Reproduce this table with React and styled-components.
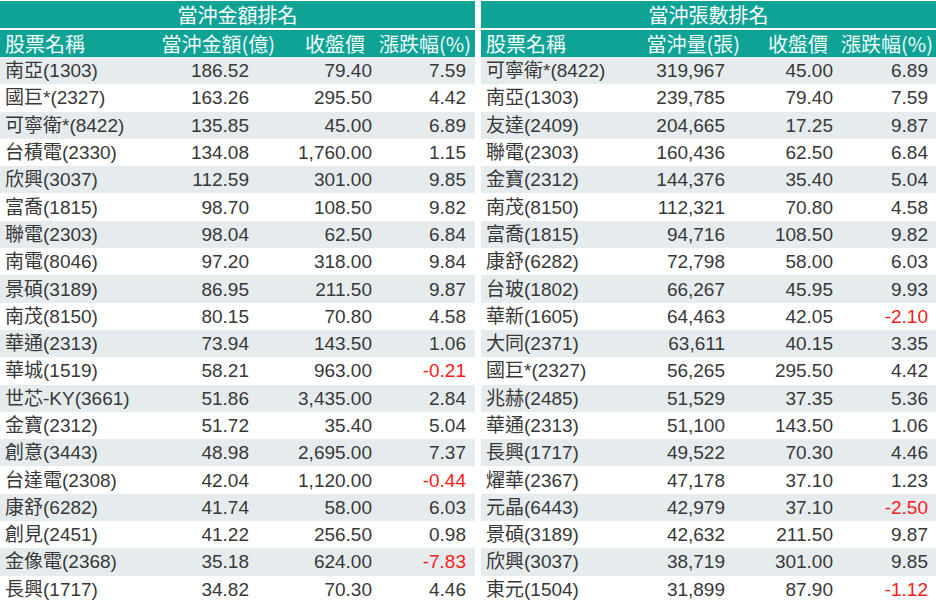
import React from 'react';
import styled, { createGlobalStyle } from 'styled-components';

const GlobalStyle = createGlobalStyle`
  html, body {
    margin: 0;
    padding: 0;
    background: #ffffff;
  }
  body {
    font-family: 'Liberation Sans', 'Noto Sans CJK TC', sans-serif;
  }
`;

const Page = styled.main`
  display: flex;
  gap: 6px;
  width: 936px;
  height: 604px;
  padding-top: 1px;
  box-sizing: border-box;
  overflow: hidden;
`;

const Table = styled.section`
  width: ${(p) => p.$width}px;
  display: flex;
  flex-direction: column;
`;

const TitleBar = styled.div`
  height: 27px;
  background: #0fa396;
  color: #ffffff;
  font-family: 'Noto Sans CJK TC', sans-serif;
  font-size: 20px;
  line-height: 27px;
  text-align: center;
  margin-bottom: 2px;
`;

const Row = styled.div`
  display: grid;
  grid-template-columns: ${(p) => p.$cols};
  height: ${(p) => (p.$head ? 27 : 27.3)}px;
  align-items: center;
  background: ${(p) => (p.$head ? '#0fa396' : p.$shade ? '#e6ecee' : '#ffffff')};
  color: ${(p) => (p.$head ? '#f2fbfa' : '#383838')};
  font-family: ${(p) =>
    p.$head
      ? "'Noto Sans CJK TC', sans-serif"
      : "'Liberation Sans', 'Noto Sans CJK TC', sans-serif"};
  font-size: ${(p) => (p.$head ? 20 : 19)}px;
  line-height: 27px;
  white-space: nowrap;
`;

const Cell = styled.div`
  text-align: ${(p) => (p.$left ? 'left' : 'right')};
  padding-left: ${(p) => (p.$left ? 5 : 0)}px;
  padding-right: ${(p) => p.$pr || 0}px;
  color: ${(p) => (p.$down ? '#ff1a1a' : 'inherit')};
`;

const leftTable = {
  title: '當沖金額排名',
  width: 475,
  cols: '150px 130px 95px 100px',
  heads: ['股票名稱', '當沖金額(億)', '收盤價', '漲跌幅(%)'],
  headPad: [0, 5, 10, 4],
  dataPad: [0, 31, 3, 9],
  rows: [
    ['南亞(1303)', '186.52', '79.40', '7.59'],
    ['國巨*(2327)', '163.26', '295.50', '4.42'],
    ['可寧衛*(8422)', '135.85', '45.00', '6.89'],
    ['台積電(2330)', '134.08', '1,760.00', '1.15'],
    ['欣興(3037)', '112.59', '301.00', '9.85'],
    ['富喬(1815)', '98.70', '108.50', '9.82'],
    ['聯電(2303)', '98.04', '62.50', '6.84'],
    ['南電(8046)', '97.20', '318.00', '9.84'],
    ['景碩(3189)', '86.95', '211.50', '9.87'],
    ['南茂(8150)', '80.15', '70.80', '4.58'],
    ['華通(2313)', '73.94', '143.50', '1.06'],
    ['華城(1519)', '58.21', '963.00', '-0.21'],
    ['世芯-KY(3661)', '51.86', '3,435.00', '2.84'],
    ['金寶(2312)', '51.72', '35.40', '5.04'],
    ['創意(3443)', '48.98', '2,695.00', '7.37'],
    ['台達電(2308)', '42.04', '1,120.00', '-0.44'],
    ['康舒(6282)', '41.74', '58.00', '6.03'],
    ['創見(2451)', '41.22', '256.50', '0.98'],
    ['金像電(2368)', '35.18', '624.00', '-7.83'],
    ['長興(1717)', '34.82', '70.30', '4.46'],
  ],
};

const rightTable = {
  title: '當沖張數排名',
  width: 455,
  cols: '140px 120px 95px 100px',
  heads: ['股票名稱', '當沖量(張)', '收盤價', '漲跌幅(%)'],
  headPad: [0, 1, 8, 3],
  dataPad: [0, 16, 3, 8],
  rows: [
    ['可寧衛*(8422)', '319,967', '45.00', '6.89'],
    ['南亞(1303)', '239,785', '79.40', '7.59'],
    ['友達(2409)', '204,665', '17.25', '9.87'],
    ['聯電(2303)', '160,436', '62.50', '6.84'],
    ['金寶(2312)', '144,376', '35.40', '5.04'],
    ['南茂(8150)', '112,321', '70.80', '4.58'],
    ['富喬(1815)', '94,716', '108.50', '9.82'],
    ['康舒(6282)', '72,798', '58.00', '6.03'],
    ['台玻(1802)', '66,267', '45.95', '9.93'],
    ['華新(1605)', '64,463', '42.05', '-2.10'],
    ['大同(2371)', '63,611', '40.15', '3.35'],
    ['國巨*(2327)', '56,265', '295.50', '4.42'],
    ['兆赫(2485)', '51,529', '37.35', '5.36'],
    ['華通(2313)', '51,100', '143.50', '1.06'],
    ['長興(1717)', '49,522', '70.30', '4.46'],
    ['燿華(2367)', '47,178', '37.10', '1.23'],
    ['元晶(6443)', '42,979', '37.10', '-2.50'],
    ['景碩(3189)', '42,632', '211.50', '9.87'],
    ['欣興(3037)', '38,719', '301.00', '9.85'],
    ['東元(1504)', '31,899', '87.90', '-1.12'],
  ],
};

const RankTable = ({ data }) => (
  <Table $width={data.width}>
    <TitleBar>{data.title}</TitleBar>
    <Row $head $cols={data.cols}>
      {data.heads.map((h, i) => (
        <Cell key={h} $left={i === 0} $pr={data.headPad[i]}>
          {h}
        </Cell>
      ))}
    </Row>
    {data.rows.map((r, idx) => (
      <Row key={r[0]} $cols={data.cols} $shade={idx % 2 === 0}>
        {r.map((v, i) => (
          <Cell
            key={i}
            $left={i === 0}
            $pr={data.dataPad[i]}
            $down={i === 3 && v.startsWith('-')}
          >
            {v}
          </Cell>
        ))}
      </Row>
    ))}
  </Table>
);

const App = () => (
  <>
    <GlobalStyle />
    <Page>
      <RankTable data={leftTable} />
      <RankTable data={rightTable} />
    </Page>
  </>
);

export default App;
